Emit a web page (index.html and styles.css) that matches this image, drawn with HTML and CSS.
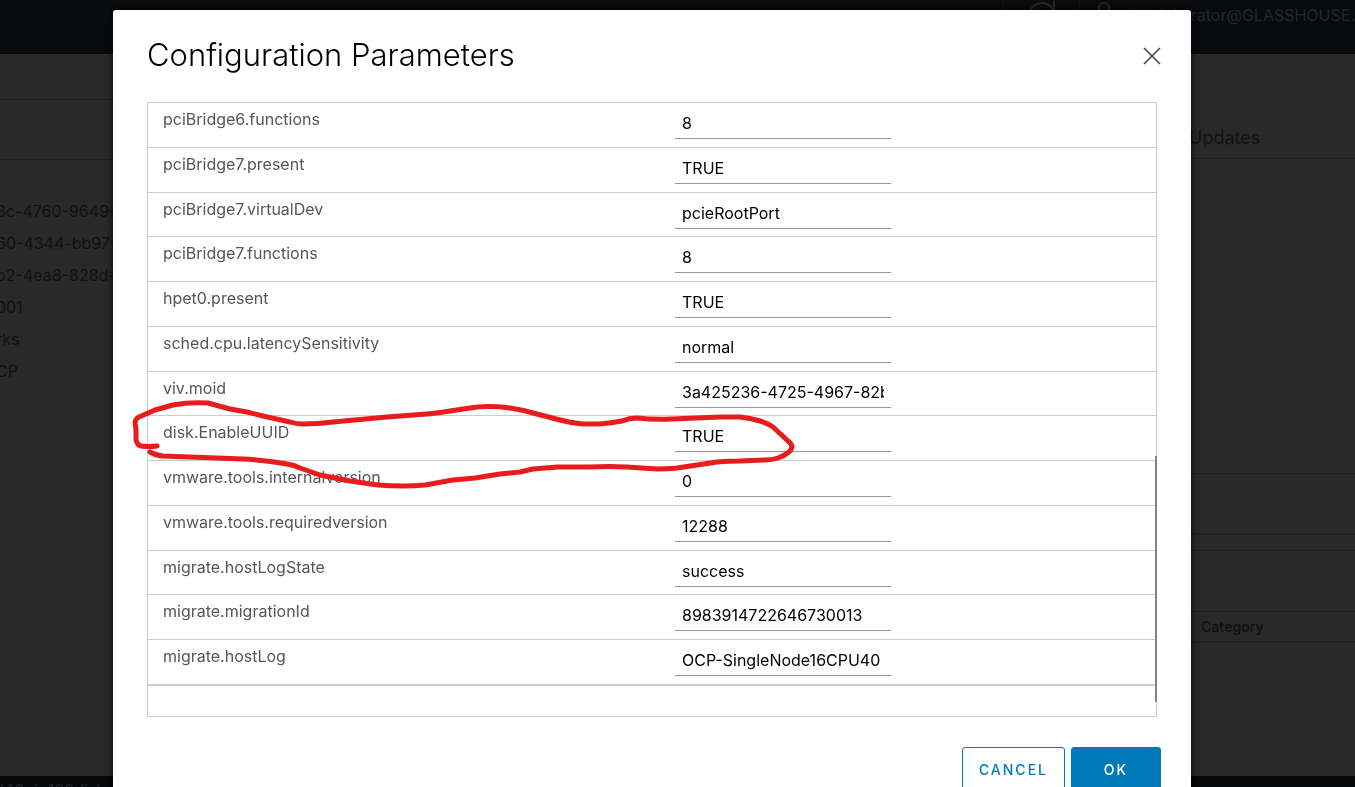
FILE: index.html
```
<!DOCTYPE html>
<html lang="en">
<head>
<meta charset="utf-8">
<title>Configuration Parameters</title>
<link rel="stylesheet" href="styles.css">
</head>
<body>
<div class="app">
  <header class="app-header">
    <span class="brand">vSphere Client</span>
    <div class="header-tools">
      <div class="tool tool-refresh">
        <svg viewBox="0 0 32 32" width="32" height="32"><path d="M3 16A13 13 0 0 1 27 9M28 1V11H18" /></svg>
      </div>
      <div class="tool tool-user">
        <svg viewBox="0 0 32 32" width="32" height="32"><circle cx="16" cy="8" r="5"/><path d="M5 27C6 14 26 14 27 27"/></svg>
        <span class="user-name">Administrator@GLASSHOUSE.</span>
      </div>
    </div>
  </header>
  <main class="app-body">
    <section class="summary">
      <div class="summary-title"></div>
      <div class="summary-tabs"></div>
      <ul class="ids">
        <li>8c-4760-9649-</li>
        <li>60-4344-bb97-</li>
        <li>b2-4ea8-828d-</li>
        <li>001</li>
        <li>rks</li>
        <li>CP</li>
      </ul>
    </section>
    <section class="details">
      <div class="tab">Updates</div>
      <div class="card card-tall"></div>
      <div class="card card-short"></div>
      <div class="card-gap"></div>
      <div class="card card-head"></div>
      <div class="column-name">Category</div>
    </section>
  </main>
  <footer class="app-footer"><span>l40gig120disk</span></footer>
</div>

<div class="backdrop">
  <div class="modal" role="dialog" aria-labelledby="dialog-title">
    <div class="modal-header">
      <h1 id="dialog-title">Configuration Parameters</h1>
      <button class="close" type="button" aria-label="Close">
        <svg viewBox="0 0 18 18" width="18" height="18"><path d="M1 1L17 17M17 1L1 17"/></svg>
      </button>
    </div>
    <div class="grid-box">
      <table class="params">
        <tbody>
          <tr><th scope="row"><label for="p1">pciBridge6.functions</label></th><td><input id="p1" type="text" value="8"></td></tr>
          <tr><th scope="row"><label for="p2">pciBridge7.present</label></th><td><input id="p2" type="text" value="TRUE"></td></tr>
          <tr><th scope="row"><label for="p3">pciBridge7.virtualDev</label></th><td><input id="p3" type="text" value="pcieRootPort"></td></tr>
          <tr><th scope="row"><label for="p4">pciBridge7.functions</label></th><td><input id="p4" type="text" value="8"></td></tr>
          <tr><th scope="row"><label for="p5">hpet0.present</label></th><td><input id="p5" type="text" value="TRUE"></td></tr>
          <tr><th scope="row"><label for="p6">sched.cpu.latencySensitivity</label></th><td><input id="p6" type="text" value="normal"></td></tr>
          <tr><th scope="row"><label for="p7">viv.moid</label></th><td><input id="p7" type="text" value="3a425236-4725-4967-82b"></td></tr>
          <tr><th scope="row"><label for="p8">disk.EnableUUID</label></th><td><input id="p8" type="text" value="TRUE"></td></tr>
          <tr><th scope="row"><label for="p9">vmware.tools.internalversion</label></th><td><input id="p9" type="text" value="0"></td></tr>
          <tr><th scope="row"><label for="p10">vmware.tools.requiredversion</label></th><td><input id="p10" type="text" value="12288"></td></tr>
          <tr><th scope="row"><label for="p11">migrate.hostLogState</label></th><td><input id="p11" type="text" value="success"></td></tr>
          <tr><th scope="row"><label for="p12">migrate.migrationId</label></th><td><input id="p12" type="text" value="8983914722646730013"></td></tr>
          <tr><th scope="row"><label for="p13">migrate.hostLog</label></th><td><input id="p13" type="text" value="OCP-SingleNode16CPU40"></td></tr>
        </tbody>
      </table>
      <div class="grid-footer"></div>
      <div class="scroll-thumb"></div>
      <svg class="ink" viewBox="0 0 680 100" width="680" height="100">
        <path d="M26 51Q17 52 10 51Q6 50 5 45V35L4 28Q4 24 8 22L24 15L42 10Q58 7 77 8L99 14L116 17L132 21L159 27Q165 29 172 29Q187 29 202 27L256 22L296 19Q308 18 319 16L339 13Q356 10 379 13Q392 15 402 18L429 25Q440 28 452 29H469Q480 28 491 26Q498 23 506 23Q523 25 541 24L589 22H609Q619 23 629 26Q636 28 642 32L657 46Q661 49 661 52Q660 58 647 63Q641 65 634 65L609 66Q597 66 586 67L566 70L546 73Q536 74 526 74L496 72Q477 71 459 72H427Q414 73 402 74L389 77L369 79L344 83L322 85L294 90Q283 91 272 91Q259 91 247 90L219 86L189 80L169 73Q163 70 156 69Q134 65 112 64L32 61Q24 60 19 57"/>
      </svg>
    </div>
    <div class="modal-footer">
      <button class="btn btn-outline" type="button">CANCEL</button>
      <button class="btn btn-primary" type="button">OK</button>
    </div>
  </div>
</div>
</body>
</html>
```
FILE: styles.css
```
* { box-sizing: border-box; }

body {
  margin: 0;
  height: 100vh;
  overflow: hidden;
  background: #292929;
  font-family: Inter, "Open Sans", sans-serif;
  font-size: 16px;
  color: #111;
}

.app { display: flex; flex-direction: column; height: 100vh; overflow: hidden; }

.app-header {
  display: flex;
  justify-content: space-between;
  height: 54px;
  flex: none;
  background: #080a0e;
  color: #252628;
}
.brand { padding-top: 5px; color: #0b0d11; }
.header-tools { display: flex; }
.tool { display: flex; align-items: flex-start; border-left: 1px solid #101216; }
.tool svg { fill: none; stroke: #252628; stroke-width: 2; }
.tool-refresh { width: 76px; padding-left: 22px; }
.tool-user { padding-left: 8px; gap: 5px; }
.user-name { padding-top: 5px; white-space: nowrap; }

.app-body { display: flex; justify-content: space-between; flex: 1; min-height: 0; }
.summary { width: 160px; }
.summary-title { height: 46px; border-bottom: 1px solid #202020; }
.summary-tabs { height: 60px; border-bottom: 1px solid #202020; }
.ids { list-style: none; margin: 35px 0 0 -4px; padding: 0; white-space: nowrap; }
.ids li { height: 32px; line-height: 32px; }

.details { width: 166px; }
.tab { height: 105px; padding-top: 73px; font-size: 18px; line-height: 22px; border-bottom: 1px solid #202020; }
.card { border-bottom: 1px solid #202020; }
.card-tall { height: 315px; }
.card-short { height: 61px; border-bottom-width: 2px; }
.card-gap { height: 16px; border-bottom: 1px solid #202020; }
.card-head { height: 61px; }
.column-name {
  height: 31px;
  padding-left: 12px;
  line-height: 30px;
  font-size: 14px;
  font-weight: 600;
  border-bottom: 2px solid #202020;
}

.app-footer { height: 11px; padding-top: 4px; flex: none; overflow: hidden; background: #06090c; color: #25282b; white-space: nowrap; }

.backdrop {
  position: fixed;
  inset: 0;
  padding: 10px 164px 0 113px;
  overflow: hidden;
}
.modal {
  padding: 24px 34px 28px;
  background: #fff;
  border-radius: 3px;
  box-shadow: 0 1px 4px 3px rgba(0, 0, 0, 0.4);
}
.modal-header { display: flex; justify-content: space-between; height: 68px; }
h1 { margin: 0; font-size: 31px; line-height: 42px; font-weight: 300; color: #000; }
.close { width: 32px; height: 44px; margin-right: -11px; padding: 0; border: 0; background: none; }
.close svg { display: block; margin: auto; fill: none; stroke: #454545; stroke-width: 1.6; }

.grid-box { position: relative; border: 1px solid #ccc; }
.params { width: 100%; border-collapse: collapse; table-layout: fixed; }
.params tr { height: 45px; border-bottom: 1px solid #ccc; }
.params tr:first-child, .params tr:nth-child(4n+3) { height: 44px; }
.params tr:last-child { height: 46px; border-bottom-width: 2px; }
.params th, .params td { padding: 0; vertical-align: top; }
.params th {
  width: 527px;
  padding: 4px 15px 0;
  text-align: left;
  font-weight: 400;
  line-height: 24px;
  color: #565656;
}
.params input {
  display: block;
  width: 216px;
  height: 29px;
  margin-top: 7px;
  padding: 0 7px 2px;
  border: 0;
  border-bottom: 1px solid #999;
  outline: 0;
  background: none;
  font: inherit;
  color: #000;
}
.grid-footer { height: 30px; }
.scroll-thumb { position: absolute; right: -1px; top: 353px; bottom: 14px; width: 2px; background: #808080; }
.ink {
  position: absolute;
  left: -17px;
  top: 292px;
  overflow: visible;
  fill: none;
  stroke: #e81c1c;
  stroke-width: 5;
  stroke-linecap: round;
  stroke-linejoin: round;
  pointer-events: none;
}

.modal-footer { display: flex; justify-content: flex-end; gap: 6px; margin: 30px -4px 0 0; }
.btn {
  min-width: 90px;
  height: 46px;
  padding: 0 16px;
  border: 1px solid #0079b8;
  border-radius: 3px;
  font: 500 14px/44px Inter, "Open Sans", sans-serif;
  letter-spacing: 2px;
}
.btn-outline { background: #fff; color: #0079b8; }
.btn-primary { background: #0079b8; color: #fff; }
```
